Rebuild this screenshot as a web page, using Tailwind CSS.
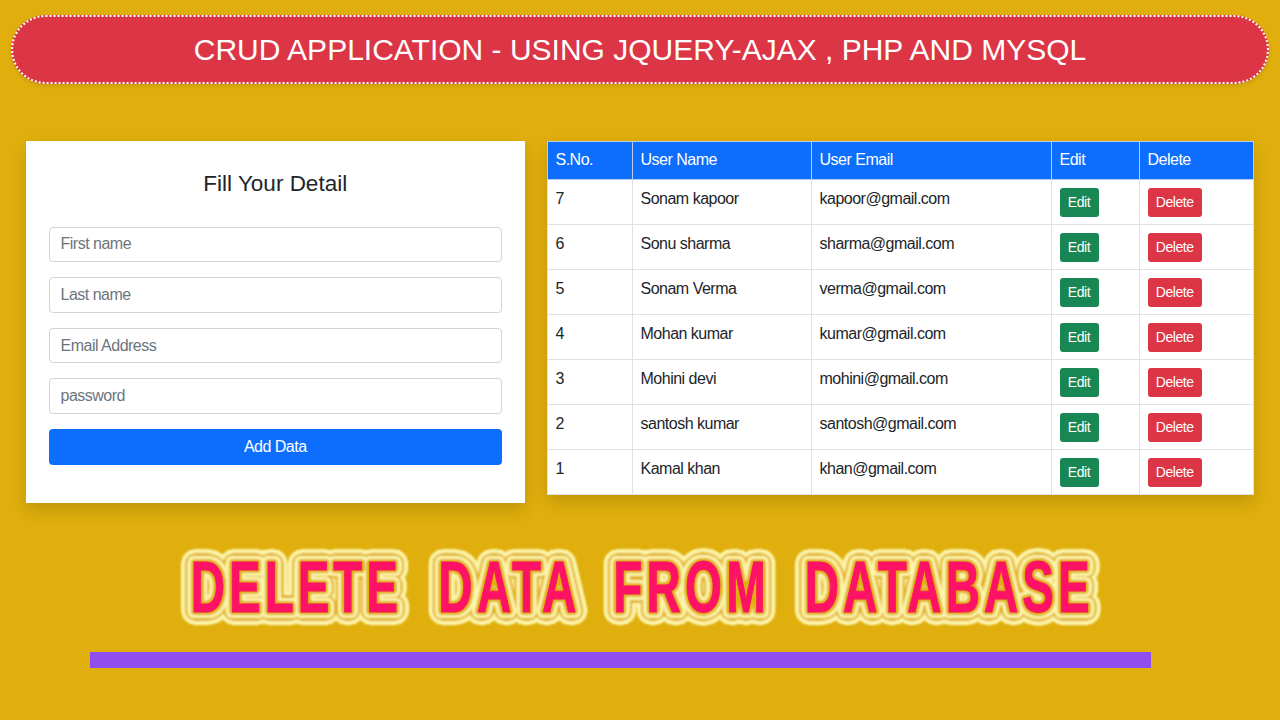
<!DOCTYPE html>
<html lang="en">
<head>
<meta charset="utf-8">
<title>CRUD Application</title>
<script src="https://cdn.jsdelivr.net/npm/@tailwindcss/browser@4"></script>
</head>
<body class="w-[1280px] h-[720px] overflow-hidden bg-[#e0af0d] text-[#212529] text-[16px] tracking-[-0.5px] leading-[22.5px] font-['Liberation_Sans',Arial,sans-serif]">
<div class="flex flex-col pt-[15px]">
  <header class="mx-[11px] h-[69px] rounded-full border-2 border-dotted border-white bg-[#dc3545] shadow-[0_2px_4px_rgba(0,0,0,0.1)] flex items-center justify-center text-white">
    <h1 class="text-[30px] tracking-normal leading-none whitespace-nowrap">CRUD APPLICATION - USING JQUERY-AJAX , PHP AND MYSQL</h1>
  </header>
  <main class="mt-[57px] ml-[26px] flex items-start gap-[22px]">
    <form class="w-[499px] h-[362px] bg-white pl-[22.5px] pr-[23px] pt-[29px] shadow-[0_7px_15px_rgba(0,0,0,0.15)] flex flex-col">
      <h2 class="text-center text-[22.5px] tracking-normal leading-[27px] mb-[29.6px]">Fill Your Detail</h2>
      <div class="flex flex-col gap-[15px]">
        <input class="h-[35.6px] rounded-[4px] border border-[#ced4da] px-[11px] placeholder:text-[#6c757d]" placeholder="First name">
        <input class="h-[35.6px] rounded-[4px] border border-[#ced4da] px-[11px] placeholder:text-[#6c757d]" placeholder="Last name">
        <input class="h-[35.6px] rounded-[4px] border border-[#ced4da] px-[11px] placeholder:text-[#6c757d]" placeholder="Email Address">
        <input class="h-[35.6px] rounded-[4px] border border-[#ced4da] px-[11px] placeholder:text-[#6c757d]" placeholder="password">
        <button type="button" class="h-[35.6px] rounded-[4px] bg-[#0d6efd] text-white">Add Data</button>
      </div>
    </form>
    <table id="users" class="w-[707px] table-fixed border-collapse bg-white shadow-[0_7px_15px_rgba(0,0,0,0.15)] [&_td]:border [&_td]:border-[#dee2e6] [&_th]:border [&_th]:border-[#b6cdf0] [&_td]:px-[7.5px] [&_th]:px-[7.5px] [&_th]:text-left [&_th]:font-normal [&_td]:align-top [&_td]:pt-[7.5px]">
      <colgroup><col class="w-[85px]"><col class="w-[179px]"><col class="w-[240px]"><col class="w-[88px]"><col></colgroup>
      <thead class="bg-[#0d6efd] text-white"><tr class="h-[38px]"><th>S.No.</th><th>User Name</th><th>User Email</th><th>Edit</th><th>Delete</th></tr></thead>
      <tbody></tbody>
    </table>
  </main>
</div>
<template id="row">
  <tr class="h-[45px]"><td></td><td></td><td></td>
    <td><button class="block h-[29px] w-[39px] rounded-[3px] bg-[#198754] text-white text-[14px] tracking-[-0.45px]">Edit</button></td>
    <td><button class="block h-[29px] w-[54.5px] rounded-[3px] bg-[#dc3545] text-white text-[14px] tracking-[-0.45px]">Delete</button></td></tr>
</template>
<svg class="absolute left-0 top-[530px] tracking-normal" width="1280" height="110" viewBox="0 530 1280 110" font-family="Liberation Sans, Arial, sans-serif" font-weight="700" font-size="72">
  <defs>
    <filter id="soft" x="-5%" y="-20%" width="110%" height="140%"><feGaussianBlur stdDeviation="0.8"/></filter>
    <filter id="glow" x="-5%" y="-20%" width="110%" height="140%"><feGaussianBlur stdDeviation="1.2"/></filter>
    <g id="words">
      <text transform="translate(190.8 612) scale(.66 1)" textLength="314">DELETE</text>
      <text transform="translate(438.3 612) scale(.66 1)" textLength="209">DATA</text>
      <text transform="translate(613.3 612) scale(.66 1)" textLength="231">FROM</text>
      <text transform="translate(804.8 612) scale(.66 1)" textLength="431.5">DATABASE</text>
    </g>
  </defs>
  <g id="halo" filter="url(#glow)"></g>
  <g id="rings" filter="url(#soft)"></g>
  <use href="#words" fill="#fd1265" stroke="#fd1265" stroke-width=".9"/>
</svg>
<div class="mt-[149px] ml-[90px] w-[1061px] h-4 bg-[#8e4dec]"></div>
<script>
const users = [[7,'Sonam kapoor','kapoor'],[6,'Sonu sharma','sharma'],[5,'Sonam Verma','verma'],[4,'Mohan kumar','kumar'],[3,'Mohini devi','mohini'],[2,'santosh kumar','santosh'],[1,'Kamal khan','khan']];
const body = document.querySelector('#users tbody'), tpl = document.getElementById('row');
for (const [id, name, mail] of users) {
  const r = tpl.content.cloneNode(true), c = r.querySelectorAll('td');
  c[0].textContent = id; c[1].textContent = name; c[2].textContent = mail + '@gmail.com';
  body.append(r);
}
// Even contours around the condensed lettering: copies shifted around a circle
function ring(parent, radius, color) {
  let s = '';
  for (let i = 0; i < 32; i++) {
    const a = i * Math.PI / 16;
    s += `<use href="#words" x="${(radius * Math.cos(a)).toFixed(2)}" y="${(radius * Math.sin(a)).toFixed(2)}" fill="${color}"/>`;
  }
  document.getElementById(parent).insertAdjacentHTML('beforeend', s);
}
ring('halo', 12.6, '#fbf0a0');
ring('rings', 11.5, '#fdf5ab');
ring('rings', 8.6, '#e0af0d');
ring('rings', 6.4, '#fdf5ab');
ring('rings', 2.8, '#e0af0d');
</script>
</body>
</html>
